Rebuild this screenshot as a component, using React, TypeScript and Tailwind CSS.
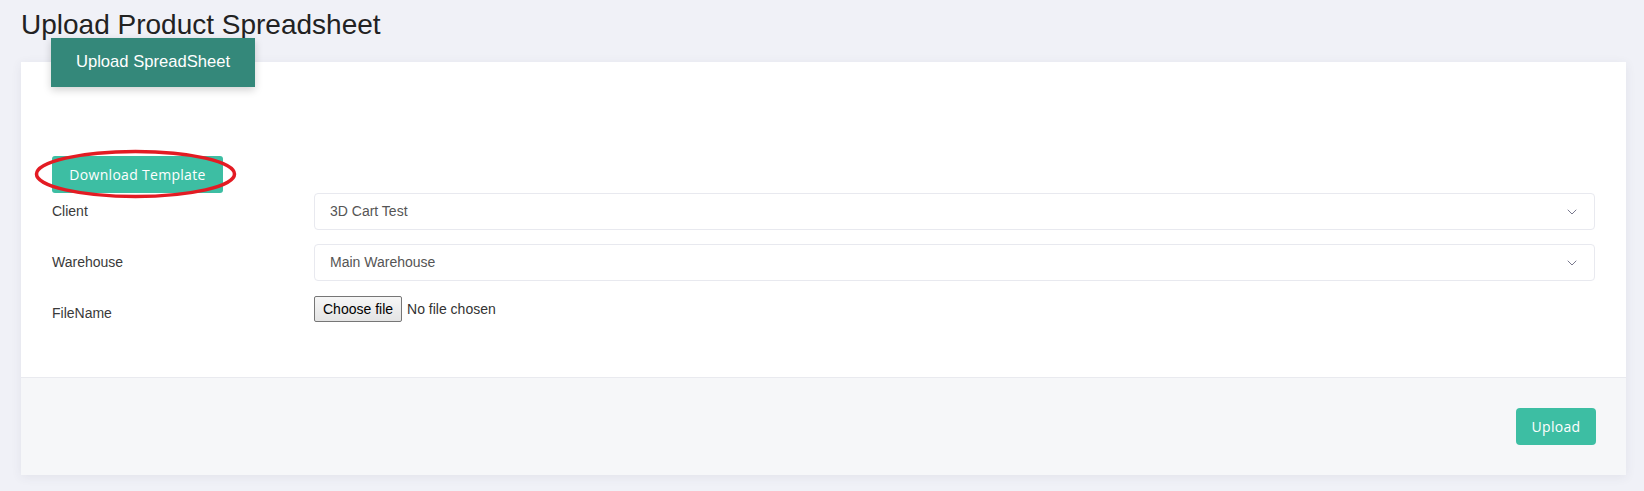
import { ChevronDown } from 'lucide-react';

const fieldClass =
  "flex h-[37px] w-full items-center justify-between rounded-[4px] border border-[#e8e9ef] bg-white pl-[15px] pr-[14px] text-[14px] text-[#555]";

const SelectField = ({ value }: { value: string }) => (
  <div className={fieldClass}>
    <span>{value}</span>
    <ChevronDown className="h-[16px] w-[16px] text-[#6f6f85]" strokeWidth={1.4} />
  </div>
);

const FormRow = ({ label, children }: { label: string; children: React.ReactNode }) => (
  <div className="flex items-start">
    <label className="w-[262px] shrink-0 pt-[8px] text-[14px] leading-[20px] text-[#3a3a3a]">{label}</label>
    <div className="flex-1">{children}</div>
  </div>
);

export default function App() {
  return (
    <div className="min-h-screen bg-[#f0f1f7] pl-[21px] pr-[18px] font-['Liberation_Sans',Arial,sans-serif]">
      <h1 className="pt-[9px] text-[28px] leading-[32px] text-[#222]">Upload Product Spreadsheet</h1>

      <div className="relative mt-[21px] bg-white shadow-[0_2px_10px_rgba(60,60,90,0.08)]">
        <div className="absolute left-[30px] top-[-24px] flex h-[49px] w-[204px] items-center justify-center bg-[#34887a] text-[16.6px] text-white shadow-[0_3px_8px_rgba(0,0,0,0.18)]">
          Upload SpreadSheet
        </div>

        <div className="px-[31px] pb-[54px] pt-[94px]">
          <div className="relative w-fit">
            <button className="h-[37px] w-[171px] rounded-[3px] bg-[#3dbea3] text-[14px] font-medium tracking-[0.3px] text-white font-['Open_Sans',sans-serif]">
              Download Template
            </button>
            <svg className="pointer-events-none absolute left-[-18px] top-[-7px]" width="203" height="50" viewBox="0 0 203 50">
              <ellipse cx="101.5" cy="25" rx="99" ry="22.5" fill="none" stroke="#e31b23" strokeWidth="3.5" />
            </svg>
          </div>

          <div className="flex flex-col gap-[14px]">
            <FormRow label="Client">
              <SelectField value="3D Cart Test" />
            </FormRow>
            <FormRow label="Warehouse">
              <SelectField value="Main Warehouse" />
            </FormRow>
            <FormRow label="FileName">
              <label className="flex items-center pt-[1px] text-[14px] text-[#333]">
                <input type="file" className="hidden" />
                <span className="flex h-[26px] items-center rounded-[2px] border border-[#767676] bg-gradient-to-b from-[#f6f6f6] to-[#e4e4e4] px-[8px] text-black">
                  Choose file
                </span>
                <span className="ml-[5px]">No file chosen</span>
              </label>
            </FormRow>
          </div>
        </div>

        <div className="flex justify-end border-t border-[#e9eaef] bg-[#f6f7f9] px-[30px] py-[30px]">
          <button className="h-[37px] w-[80px] rounded-[4px] bg-[#3dbea3] text-[14px] font-medium tracking-[0.3px] text-white font-['Open_Sans',sans-serif]">
            Upload
          </button>
        </div>
      </div>
    </div>
  );
}
